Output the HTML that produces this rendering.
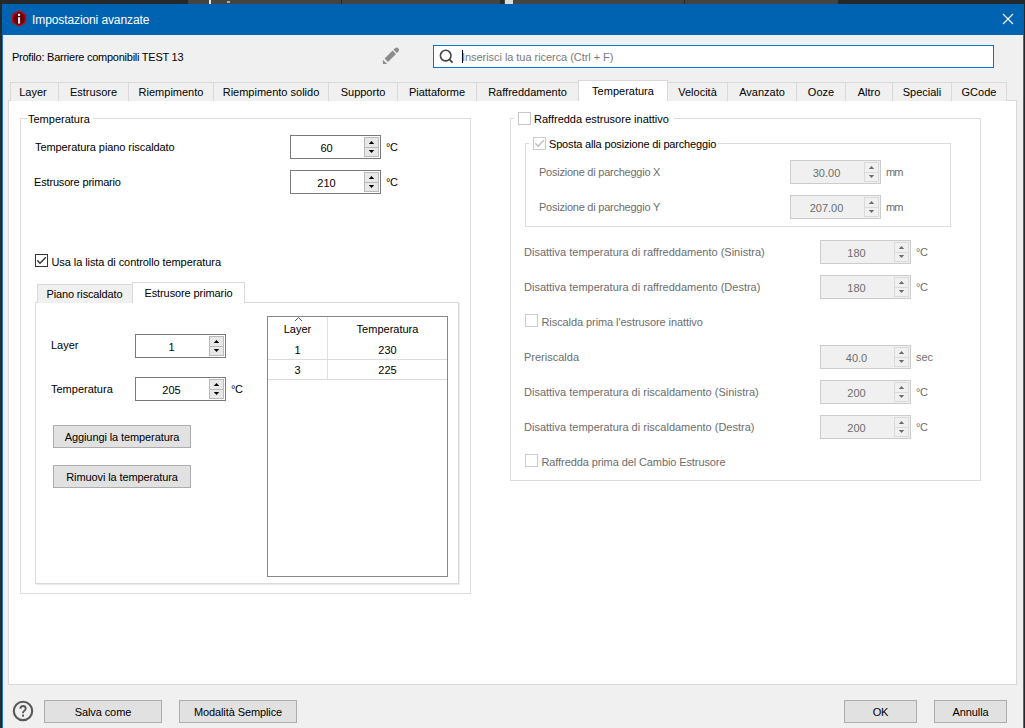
<!DOCTYPE html>
<html><head><meta charset="utf-8">
<style>
*{box-sizing:border-box;margin:0;padding:0}
html,body{width:1025px;height:728px;overflow:hidden;background:#26292b;font-family:"Liberation Sans",sans-serif;font-size:11px;color:#000}
.a{position:absolute}
.t{position:absolute;white-space:nowrap;line-height:15px;height:15px}
#win{position:absolute;left:2px;top:4px;width:1022px;height:730px;background:#f0f0f0;border-left:1px solid #1a73c4;border-right:1px solid #1a73c4}
#title{position:absolute;left:2px;top:4px;width:1022px;height:31px;background:#0063b1}
.tab{position:absolute;top:82px;height:19px;border:1px solid #d9d9d9;border-right:none;border-bottom:none;background:#f0f0f0;text-align:center;line-height:19px}
.pane{position:absolute;background:#fff;border:1px solid #d9d9d9}
.grp{position:absolute;border:1px solid #dcdcdc}
.sb{position:absolute;width:91px;height:24px;border:1px solid #7a7a7a;background:#fff;text-align:center;line-height:25px;padding-right:18px}
.sb .bt{position:absolute;right:1px;width:15px;height:11px;color:#000;border:1px solid #b9b9b9;background:#e8e8e8}
.sb .up{top:1px}
.sb .bt svg{position:absolute;left:0;top:0}
.sb .dn{top:11px;height:10px}
.sb.dis{border-color:#cccccc;background:#f0f0f0;color:#6d6d6d}
.sb.dis .bt{border-color:#dadada;background:#f0f0f0;color:#6d6d6d}
.tri{position:absolute;left:4px;width:0;height:0;border-left:3px solid transparent;border-right:3px solid transparent}
.up .tri{top:2px;border-bottom:3px solid #000}
.dn .tri{top:2px;border-top:3px solid #000}
.dis .up .tri{border-bottom-color:#6d6d6d}
.dis .dn .tri{border-top-color:#6d6d6d}
.cb{position:absolute;width:13px;height:13px;border:1px solid #333;background:#fff}
.cb.dis{border-color:#cccccc}
.btn{position:absolute;border:1px solid #adadad;background:#e1e1e1;text-align:center;line-height:23px;letter-spacing:-0.1px}
.g{color:#6d6d6d}
</style></head><body>
<div id="win"></div>
<div id="title"></div>
<!-- top app strip fragments -->
<div class="a" style="left:188px;top:0;width:650px;height:4px;background:#444"></div>
<div class="a" style="left:209px;top:0;width:2px;height:4px;background:#e8e8e8"></div>
<div class="a" style="left:227px;top:1px;width:3px;height:2px;background:#aaa"></div>
<div class="a" style="left:341px;top:0;width:1px;height:4px;background:#2a2a2a"></div>
<div class="a" style="left:500px;top:0;width:4px;height:4px;background:#2a2a2a"></div>
<div class="a" style="left:505px;top:0;width:8px;height:4px;background:#ddd"></div>
<div class="a" style="left:684px;top:0;width:1px;height:4px;background:#2a2a2a"></div>
<!-- title icon -->
<svg class="a" style="left:11px;top:10px" width="16" height="17" viewBox="0 0 16 17">
<defs><radialGradient id="rg" cx="50%" cy="50%" r="55%"><stop offset="0" stop-color="#4a0006"/><stop offset="0.7" stop-color="#7a000a"/><stop offset="1" stop-color="#c8101c"/></radialGradient></defs>
<polygon points="8,0.8 14.8,4.5 14.8,12.5 8,16.2 1.2,12.5 1.2,4.5" fill="url(#rg)" stroke="#b8101a" stroke-width="1"/>
<rect x="7" y="3.8" width="2.1" height="2.1" fill="#f4f4f4"/>
<rect x="7" y="7.2" width="2.1" height="6.4" fill="#e8e8e8"/>
</svg>
<div class="t" style="left:32px;top:13px;font-size:12px;line-height:14px;height:14px;color:#fff;letter-spacing:-0.1px">Impostazioni avanzate</div>
<!-- close X -->
<svg class="a" style="left:1002px;top:13px" width="12" height="12" viewBox="0 0 12 12">
<path d="M1 1L11 11M11 1L1 11" stroke="#fff" stroke-width="1.1"/>
</svg>

<!-- profile row -->
<div class="t" style="left:12px;top:50px;letter-spacing:-0.25px">Profilo: Barriere componibili TEST 13</div>
<svg class="a" style="left:378px;top:44px" width="26" height="24" viewBox="0 0 26 24">
<path d="M4.9 15.8 L4.9 19.9 L9.1 19.9 Z" fill="#8c8c8c"/>
<path d="M6.6 14.6 L14.6 6.6 L18.0 10.0 L10.0 18.0 Z" fill="#8c8c8c"/>
<path d="M15.5 5.7 L16.9 4.3 A2.4 2.4 0 0 1 20.3 7.7 L18.9 9.1 Z" fill="#8c8c8c"/>
</svg>
<div class="a" style="left:433px;top:45px;width:561px;height:23px;border:1px solid #0078d7;background:#fff"></div>
<svg class="a" style="left:438px;top:48px" width="18" height="18" viewBox="0 0 18 18">
<circle cx="7.7" cy="7.6" r="5.3" fill="none" stroke="#444" stroke-width="1.6"/>
<path d="M11.6 11.6 L14.6 14.6" stroke="#444" stroke-width="1.7"/>
</svg>
<div class="a" style="left:462px;top:50px;width:1px;height:13px;background:#000"></div>
<div class="t" style="left:462px;top:50px;color:#7a7a7a;letter-spacing:-0.05px">Inserisci la tua ricerca (Ctrl + F)</div>

<!-- main tab pane -->
<div class="pane" style="left:8px;top:100px;width:1009px;height:585px"></div>
<div class="tab" style="left:10px;width:48px;padding-right:3px">Layer</div>
<div class="tab" style="left:58px;width:70px;">Estrusore</div>
<div class="tab" style="left:128px;width:85px;">Riempimento</div>
<div class="tab" style="left:213px;width:115px;">Riempimento solido</div>
<div class="tab" style="left:328px;width:69px;">Supporto</div>
<div class="tab" style="left:397px;width:79px;">Piattaforme</div>
<div class="tab" style="left:476px;width:102px;">Raffreddamento</div>
<div class="a" style="left:578px;top:80px;width:90px;height:21px;border:1px solid #d9d9d9;border-bottom:none;background:#fff;text-align:center;line-height:20px">Temperatura</div>
<div class="tab" style="left:667px;width:60px;">Velocità</div>
<div class="tab" style="left:727px;width:69px;">Avanzato</div>
<div class="tab" style="left:796px;width:49px;">Ooze</div>
<div class="tab" style="left:845px;width:47px;">Altro</div>
<div class="tab" style="left:892px;width:59px;">Speciali</div>
<div class="tab" style="left:951px;width:56px;border-right:1px solid #d9d9d9;">GCode</div>

<!-- left group -->
<div class="grp" style="left:20px;top:118px;width:451px;height:476px"></div>
<div class="t" style="left:28px;top:112px;padding:0 3px 0 0;background:#fff">Temperatura</div>
<div class="t" style="left:35px;top:140px;letter-spacing:-0.08px">Temperatura piano riscaldato</div>
<div class="t" style="left:34px;top:175px;letter-spacing:-0.17px">Estrusore primario</div>
<div class="sb" style="left:290px;top:135px">60<div class="bt up"><svg width="13" height="9" viewBox="0 0 13 9"><polygon points="3.8,6 6.5,2.9 9.2,6" fill="currentColor"/></svg></div><div class="bt dn"><svg width="13" height="8" viewBox="0 0 13 8"><polygon points="3.8,1.9 6.5,5 9.2,1.9" fill="currentColor"/></svg></div></div>
<div class="t" style="left:386px;top:140px;letter-spacing:-0.5px">°C</div>
<div class="sb" style="left:290px;top:170px">210<div class="bt up"><svg width="13" height="9" viewBox="0 0 13 9"><polygon points="3.8,6 6.5,2.9 9.2,6" fill="currentColor"/></svg></div><div class="bt dn"><svg width="13" height="8" viewBox="0 0 13 8"><polygon points="3.8,1.9 6.5,5 9.2,1.9" fill="currentColor"/></svg></div></div>
<div class="t" style="left:386px;top:175px;letter-spacing:-0.5px">°C</div>

<div class="cb" style="left:35px;top:254px"></div>
<svg class="a" style="left:35px;top:254px" width="13" height="13" viewBox="0 0 13 13"><path d="M2.3 6.3 L5 9.2 L10.8 3.2" fill="none" stroke="#333" stroke-width="1.3"/></svg>
<div class="t" style="left:51.5px;top:255px;letter-spacing:-0.08px">Usa la lista di controllo temperatura</div>

<!-- inner tabs -->
<div class="pane" style="left:35px;top:302px;width:424px;height:282px;border-color:#dadada;box-shadow:1px 1px 0 #ececec"></div>
<div class="tab" style="left:37px;top:284px;width:96px;height:19px;line-height:18px;letter-spacing:-0.15px;padding-right:2px">Piano riscaldato</div>
<div class="a" style="left:132px;top:282px;width:113px;height:21px;border:1px solid #d9d9d9;border-bottom:none;background:#fff;text-align:center;line-height:20px;letter-spacing:-0.1px">Estrusore primario</div>

<div class="t" style="left:51px;top:338px">Layer</div>
<div class="sb" style="left:135px;top:334px">1<div class="bt up"><svg width="13" height="9" viewBox="0 0 13 9"><polygon points="3.8,6 6.5,2.9 9.2,6" fill="currentColor"/></svg></div><div class="bt dn"><svg width="13" height="8" viewBox="0 0 13 8"><polygon points="3.8,1.9 6.5,5 9.2,1.9" fill="currentColor"/></svg></div></div>
<div class="t" style="left:51px;top:382px">Temperatura</div>
<div class="sb" style="left:135px;top:377px">205<div class="bt up"><svg width="13" height="9" viewBox="0 0 13 9"><polygon points="3.8,6 6.5,2.9 9.2,6" fill="currentColor"/></svg></div><div class="bt dn"><svg width="13" height="8" viewBox="0 0 13 8"><polygon points="3.8,1.9 6.5,5 9.2,1.9" fill="currentColor"/></svg></div></div>
<div class="t" style="left:231px;top:382px;letter-spacing:-0.5px">°C</div>
<div class="btn" style="left:53px;top:425px;width:138px;height:23px">Aggiungi la temperatura</div>
<div class="btn" style="left:53px;top:465px;width:138px;height:23px">Rimuovi la temperatura</div>

<!-- table -->
<div class="a" style="left:267px;top:316px;width:181px;height:261px;border:1px solid #828790;background:#fff"></div>
<div class="a" style="left:327px;top:317px;width:1px;height:63px;background:#e0e0e0"></div>
<div class="a" style="left:268px;top:359px;width:179px;height:1px;background:#dcdcdc"></div>
<div class="a" style="left:268px;top:379px;width:179px;height:1px;background:#dcdcdc"></div>
<svg class="a" style="left:294px;top:316px" width="9" height="6" viewBox="0 0 9 6"><path d="M1 5 L4.5 1.5 L8 5" fill="none" stroke="#444" stroke-width="0.9"/></svg>
<div class="t" style="left:268px;top:322px;width:59px;text-align:center">Layer</div>
<div class="t" style="left:328px;top:322px;width:119px;text-align:center">Temperatura</div>
<div class="t" style="left:268px;top:343px;width:59px;text-align:center">1</div>
<div class="t" style="left:328px;top:343px;width:119px;text-align:center">230</div>
<div class="t" style="left:268px;top:363px;width:59px;text-align:center">3</div>
<div class="t" style="left:328px;top:363px;width:119px;text-align:center">225</div>

<!-- right group -->
<div class="grp" style="left:510px;top:118px;width:471px;height:363px"></div>
<div class="a" style="left:514px;top:110px;width:160px;height:16px;background:#fff"></div>
<div class="cb dis" style="left:518px;top:112px;border-color:#c6c6c6"></div>
<div class="t" style="left:534px;top:112px">Raffredda estrusore inattivo</div>

<div class="grp" style="left:525px;top:143px;width:426px;height:84px"></div>
<div class="a" style="left:529px;top:136px;width:189px;height:16px;background:#fff"></div>
<div class="cb dis" style="left:533px;top:137px"></div>
<svg class="a" style="left:533px;top:137px" width="13" height="13" viewBox="0 0 13 13"><path d="M2.3 6.3 L5 9.2 L10.8 3.2" fill="none" stroke="#bdbdbd" stroke-width="1.3"/></svg>
<div class="t" style="left:549px;top:137px;letter-spacing:-0.17px">Sposta alla posizione di parcheggio</div>

<div class="t g" style="left:539px;top:165px;letter-spacing:-0.24px">Posizione di parcheggio X</div>
<div class="sb dis" style="left:790px;top:160px">30.00<div class="bt up"><svg width="13" height="9" viewBox="0 0 13 9"><polygon points="3.8,6 6.5,2.9 9.2,6" fill="currentColor"/></svg></div><div class="bt dn"><svg width="13" height="8" viewBox="0 0 13 8"><polygon points="3.8,1.9 6.5,5 9.2,1.9" fill="currentColor"/></svg></div></div>
<div class="t g" style="left:886px;top:165px;letter-spacing:-0.8px">mm</div>
<div class="t g" style="left:539px;top:200px;letter-spacing:-0.24px">Posizione di parcheggio Y</div>
<div class="sb dis" style="left:790px;top:195px">207.00<div class="bt up"><svg width="13" height="9" viewBox="0 0 13 9"><polygon points="3.8,6 6.5,2.9 9.2,6" fill="currentColor"/></svg></div><div class="bt dn"><svg width="13" height="8" viewBox="0 0 13 8"><polygon points="3.8,1.9 6.5,5 9.2,1.9" fill="currentColor"/></svg></div></div>
<div class="t g" style="left:886px;top:200px;letter-spacing:-0.8px">mm</div>
<div class="t g" style="left:524px;top:245px">Disattiva temperatura di raffreddamento (Sinistra)</div>
<div class="sb dis" style="left:820px;top:240px">180<div class="bt up"><svg width="13" height="9" viewBox="0 0 13 9"><polygon points="3.8,6 6.5,2.9 9.2,6" fill="currentColor"/></svg></div><div class="bt dn"><svg width="13" height="8" viewBox="0 0 13 8"><polygon points="3.8,1.9 6.5,5 9.2,1.9" fill="currentColor"/></svg></div></div>
<div class="t g" style="left:916px;top:245px;letter-spacing:-0.5px">°C</div>
<div class="t g" style="left:524px;top:280px">Disattiva temperatura di raffreddamento (Destra)</div>
<div class="sb dis" style="left:820px;top:275px">180<div class="bt up"><svg width="13" height="9" viewBox="0 0 13 9"><polygon points="3.8,6 6.5,2.9 9.2,6" fill="currentColor"/></svg></div><div class="bt dn"><svg width="13" height="8" viewBox="0 0 13 8"><polygon points="3.8,1.9 6.5,5 9.2,1.9" fill="currentColor"/></svg></div></div>
<div class="t g" style="left:916px;top:280px;letter-spacing:-0.5px">°C</div>
<div class="t g" style="left:524px;top:350px">Preriscalda</div>
<div class="sb dis" style="left:820px;top:345px">40.0<div class="bt up"><svg width="13" height="9" viewBox="0 0 13 9"><polygon points="3.8,6 6.5,2.9 9.2,6" fill="currentColor"/></svg></div><div class="bt dn"><svg width="13" height="8" viewBox="0 0 13 8"><polygon points="3.8,1.9 6.5,5 9.2,1.9" fill="currentColor"/></svg></div></div>
<div class="t g" style="left:916px;top:350px">sec</div>
<div class="t g" style="left:524px;top:385px">Disattiva temperatura di riscaldamento (Sinistra)</div>
<div class="sb dis" style="left:820px;top:380px">200<div class="bt up"><svg width="13" height="9" viewBox="0 0 13 9"><polygon points="3.8,6 6.5,2.9 9.2,6" fill="currentColor"/></svg></div><div class="bt dn"><svg width="13" height="8" viewBox="0 0 13 8"><polygon points="3.8,1.9 6.5,5 9.2,1.9" fill="currentColor"/></svg></div></div>
<div class="t g" style="left:916px;top:385px;letter-spacing:-0.5px">°C</div>
<div class="t g" style="left:524px;top:420px">Disattiva temperatura di riscaldamento (Destra)</div>
<div class="sb dis" style="left:820px;top:415px">200<div class="bt up"><svg width="13" height="9" viewBox="0 0 13 9"><polygon points="3.8,6 6.5,2.9 9.2,6" fill="currentColor"/></svg></div><div class="bt dn"><svg width="13" height="8" viewBox="0 0 13 8"><polygon points="3.8,1.9 6.5,5 9.2,1.9" fill="currentColor"/></svg></div></div>
<div class="t g" style="left:916px;top:420px;letter-spacing:-0.5px">°C</div>

<div class="cb dis" style="left:525px;top:314px"></div>
<div class="t g" style="left:541.5px;top:315px;letter-spacing:-0.08px">Riscalda prima l'estrusore inattivo</div>
<div class="cb dis" style="left:525px;top:454px"></div>
<div class="t g" style="left:541.5px;top:455px;letter-spacing:-0.1px">Raffredda prima del Cambio Estrusore</div>

<!-- bottom -->
<svg class="a" style="left:12px;top:700px" width="22" height="22" viewBox="0 0 22 22">
<circle cx="11" cy="10.9" r="9.2" fill="none" stroke="#585858" stroke-width="2.1"/>
<path d="M8.4 8.7 Q8.4 6 11 6 Q13.7 6 13.7 8.5 Q13.7 10 12.1 11 Q11 11.7 11 13.2" fill="none" stroke="#585858" stroke-width="1.9"/>
<rect x="10" y="14.6" width="2" height="2" fill="#585858"/>
</svg>
<div class="btn" style="left:44px;top:700px;width:118px;height:23px">Salva come</div>
<div class="btn" style="left:179px;top:700px;width:118px;height:23px">Modalità Semplice</div>
<div class="btn" style="left:844px;top:700px;width:73px;height:23px">OK</div>
<div class="btn" style="left:934px;top:700px;width:73px;height:23px">Annulla</div>
</body></html>
